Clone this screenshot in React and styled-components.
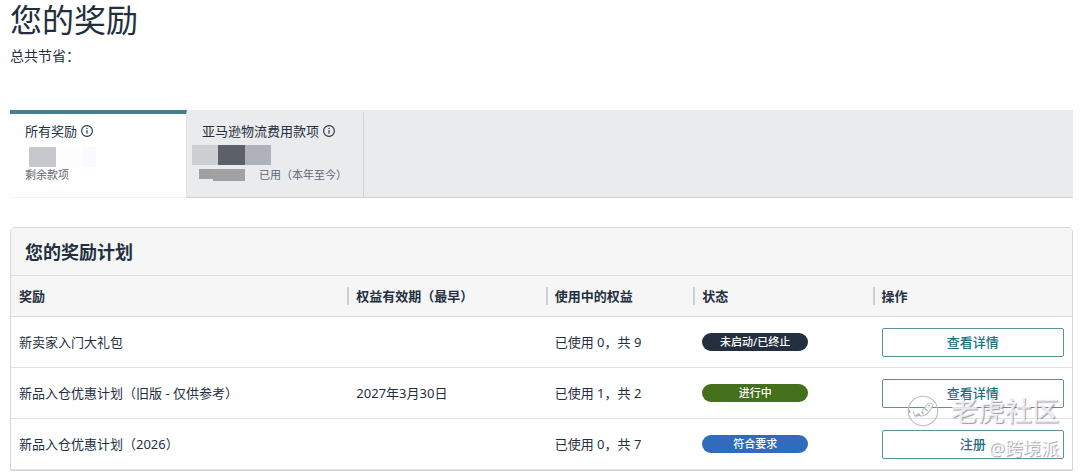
import React from 'react';
import styled, { createGlobalStyle } from 'styled-components';

const GlobalStyle = createGlobalStyle`
  * {
    box-sizing: border-box;
  }
  body {
    margin: 0;
    background: #fff;
    color: #232f3e;
    font-family: 'Noto Sans', 'Noto Sans CJK SC', sans-serif;
    font-size: 13px;
    line-height: 18px;
  }
  button {
    font-family: inherit;
    cursor: pointer;
  }
`;

const Page = styled.main`
  position: relative;
  padding: 0 7px 0 10px;
`;

const Title = styled.h1`
  margin: 0;
  font-size: 32px;
  line-height: 40px;
  font-weight: 400;
`;

const Savings = styled.p`
  margin: 6px 0 0;
  font-size: 14px;
  line-height: 20px;
`;

const Tabs = styled.div`
  display: flex;
  margin-top: 44px;
  background: #eaebed;
  box-shadow: inset 0 -1px #cfd1d4;
`;

const Tab = styled.button`
  display: flex;
  flex-direction: column;
  align-items: flex-start;
  width: 177px;
  height: 88px;
  padding: 8px 0 0 15px;
  border: 0;
  border-top: 4px solid ${p => (p.$active ? '#467f8e' : 'transparent')};
  border-right: 1px solid ${p => (p.$active ? '#e0e2e5' : '#d0d2d5')};
  border-bottom: 1px solid ${p => (p.$active ? '#f1f1f1' : 'transparent')};
  background: ${p => (p.$active ? '#fff' : 'transparent')};
  color: #232f3e;
  text-align: left;
`;

const TabLabel = styled.span`
  display: flex;
  align-items: center;
  gap: 4px;
  font-size: 13px;
  line-height: 18px;
`;

const Mosaic = styled.span`
  display: flex;
  margin: ${p => p.$margin};
`;

const Block = styled.span`
  width: ${p => p.$width}px;
  height: ${p => p.$height || 20}px;
  background: ${p => p.$color};
`;

const TabNote = styled.span`
  display: flex;
  align-items: center;
  color: #5f6771;
  font-size: 11px;
  line-height: 16px;
`;

const Card = styled.section`
  margin-top: 29px;
  border: 1px solid #d5d7d9;
  border-radius: 5px 5px 0 0;
  overflow: hidden;
`;

const CardTitle = styled.h2`
  margin: 0;
  padding: 12px 14px 11px;
  border-bottom: 1px solid #d9dbdd;
  background: #f6f6f6;
  font-size: 18px;
  line-height: 24px;
  font-weight: 700;
`;

const Table = styled.table`
  width: 100%;
  table-layout: fixed;
  border-collapse: separate;
  border-spacing: 0;
`;

const HeadCell = styled.th`
  width: ${p => p.$width};
  height: 41px;
  padding: 0;
  border-bottom: 1px solid #d9dbdd;
  background: #f6f6f6;
  font-weight: 700;
  text-align: left;

  span {
    display: block;
    padding-left: 7px;
    border-left: 2px solid #cdd0d3;
  }
  &:first-child span {
    padding-left: 6px;
    border-color: transparent;
  }
`;

const Cell = styled.td`
  height: 51px;
  padding: 0 8px 0 9px;
  border-bottom: 1px solid #dfe2e4;

  &:first-child {
    padding-left: 8px;
  }
`;

const pillColors = {
  ended: '#232f3e',
  active: '#44701c',
  eligible: '#2f6cbd',
};

const Pill = styled.span`
  display: block;
  width: 106px;
  border-radius: 9px;
  background: ${p => pillColors[p.$status]};
  color: #fff;
  font-size: 11px;
  line-height: 18px;
  font-weight: 500;
  text-align: center;
`;

const ActionButton = styled.button`
  display: block;
  width: 100%;
  height: 29px;
  padding: 0;
  border: 1px solid #5a929b;
  border-radius: 2px;
  background: #fff;
  color: #21707f;
  font-size: 13px;
  font-weight: 500;
  line-height: 18px;
`;

const Watermark = styled.div`
  position: absolute;
  right: 21px;
  bottom: 10px;
  display: flex;
  flex-direction: column;
  align-items: flex-end;
  color: rgba(255, 255, 255, 0.8);
  text-shadow: 1px 1px 1px rgba(125, 120, 140, 0.75);
  pointer-events: none;
`;

const Brand = styled.div`
  display: flex;
  align-items: center;
  gap: 12px;
  font-size: 27px;
  line-height: 40px;
  font-weight: 500;
`;

const Author = styled.div`
  margin-top: 4px;
  font-size: 18px;
  line-height: 26px;
`;

const InfoIcon = () => (
  <svg width="12" height="12" viewBox="0 0 12 12" fill="none" aria-hidden="true">
    <circle cx="6" cy="6" r="5.4" stroke="#232f3e" strokeWidth="1.1" />
    <path d="M6 5v3.8" stroke="#232f3e" strokeWidth="1.1" />
    <circle cx="6" cy="3.4" r="0.7" fill="#232f3e" />
  </svg>
);

const TigerIcon = () => (
  <svg width="32" height="32" viewBox="0 0 32 32" fill="none" aria-hidden="true">
    <circle cx="16" cy="16" r="14.7" stroke="#bcbdc3" strokeWidth="1.1" />
    <path
      d="M6 17c1 1 1 3.5 2.500 4.500c1-2 2-3 3.500-3c0 2 1 2.700 3 2.500c5-1 8-4.500 10-8.500c1-2.500 0-4.500-2-4.500c-2.500 0-4 2.500-5 4.500c-.8 1.500-2 2-3 2.500"
      fill="#fff"
      fillOpacity="0.8"
      stroke="#c0c1c7"
      strokeWidth="1.2"
    />
    <path d="M2 15l1 3M9 21l4-1M14.500 16.500l2 2.500M18 13.500l2.500 2.500M21 11l2-1" stroke="#aeb0b7" strokeWidth="1.3" />
  </svg>
);

const columns = [
  { name: '奖励', width: '31.7%' },
  { name: '权益有效期（最早）', width: '18.7%' },
  { name: '使用中的权益', width: '13.9%' },
  { name: '状态', width: '16.9%' },
  { name: '操作', width: '18.8%' },
];

const rewards = [
  {
    name: '新卖家入门大礼包',
    expires: '',
    usage: '已使用 0，共 9',
    status: 'ended',
    statusText: '未启动/已终止',
    action: '查看详情',
  },
  {
    name: '新品入仓优惠计划（旧版 - 仅供参考）',
    expires: '2027年3月30日',
    usage: '已使用 1，共 2',
    status: 'active',
    statusText: '进行中',
    action: '查看详情',
  },
  {
    name: '新品入仓优惠计划（2026）',
    expires: '',
    usage: '已使用 0，共 7',
    status: 'eligible',
    statusText: '符合要求',
    action: '注册',
  },
];

const RewardTabs = () => (
  <Tabs role="tablist">
    <Tab type="button" role="tab" aria-selected="true" $active>
      <TabLabel>
        所有奖励 <InfoIcon />
      </TabLabel>
      <Mosaic $margin="7px 0 0 4px">
        <Block $width={27} $color="#c6c7ca" />
        <Block $width={27} $color="#fdfdfe" />
        <Block $width={13} $color="#f8faff" />
      </Mosaic>
      <TabNote>剩余款项</TabNote>
    </Tab>
    <Tab type="button" role="tab" aria-selected="false">
      <TabLabel>
        亚马逊物流费用款项 <InfoIcon />
      </TabLabel>
      <Mosaic $margin="5px 0 2px -10px">
        <Block $width={26} $color="#cdd0d2" />
        <Block $width={27} $color="#5c6067" />
        <Block $width={26} $color="#afb2b8" />
      </Mosaic>
      <TabNote>
        <Mosaic $margin="0 14px 0 -3px">
          <Block $width={14} $height={10} $color="#9fa0a2" />
          <Block $width={32} $height={12} $color="#a0a1a3" />
        </Mosaic>
        已用（本年至今）
      </TabNote>
    </Tab>
  </Tabs>
);

const RewardRow = ({ reward }) => (
  <tr>
    <Cell>{reward.name}</Cell>
    <Cell>{reward.expires}</Cell>
    <Cell>{reward.usage}</Cell>
    <Cell>
      <Pill $status={reward.status}>{reward.statusText}</Pill>
    </Cell>
    <Cell>
      <ActionButton type="button">{reward.action}</ActionButton>
    </Cell>
  </tr>
);

export default function App() {
  return (
    <Page lang="zh-CN">
      <GlobalStyle />
      <Title>您的奖励</Title>
      <Savings>总共节省：</Savings>
      <RewardTabs />
      <Card>
        <CardTitle>您的奖励计划</CardTitle>
        <Table>
          <thead>
            <tr>
              {columns.map(c => (
                <HeadCell key={c.name} $width={c.width} scope="col">
                  <span>{c.name}</span>
                </HeadCell>
              ))}
            </tr>
          </thead>
          <tbody>
            {rewards.map(r => (
              <RewardRow key={r.name} reward={r} />
            ))}
          </tbody>
        </Table>
      </Card>
      <Watermark>
        <Brand>
          <TigerIcon />
          老虎社区
        </Brand>
        <Author>@跨境派</Author>
      </Watermark>
    </Page>
  );
}
